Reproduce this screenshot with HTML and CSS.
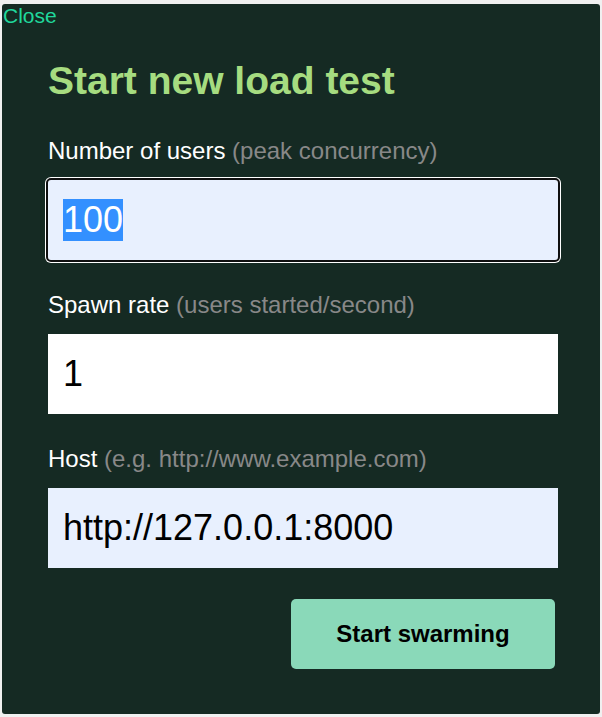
FILE: index.html
```html
<!DOCTYPE html>
<html lang="en">
<head>
<meta charset="utf-8">
<title>Start new load test</title>
<link rel="stylesheet" href="styles.css">
</head>
<body>
<div class="modal">
  <a class="close" href="#">Close</a>
  <form class="form">
    <h1 class="title">Start new load test</h1>
    <div class="field">
      <label class="label" for="users">Number of users <span class="hint">(peak concurrency)</span></label>
      <input class="input autofill focused" id="users" type="text" value="100">
    </div>
    <div class="field">
      <label class="label" for="rate">Spawn rate <span class="hint">(users started/second)</span></label>
      <input class="input" id="rate" type="text" value="1">
    </div>
    <div class="field">
      <label class="label" for="host">Host <span class="hint">(e.g. http://www.example.com)</span></label>
      <input class="input autofill" id="host" type="text" value="http://127.0.0.1:8000">
    </div>
    <button class="submit" type="button">Start swarming</button>
  </form>
</div>
<script src="script.js"></script>
</body>
</html>
```
FILE: styles.css
```css
html, body {
  margin: 0;
  padding: 0;
}
body {
  background: #f0f0f0;
  font-family: "Liberation Sans", Arial, sans-serif;
}
.modal {
  box-sizing: border-box;
  margin: 4px 2px 3px 2px;
  height: 710px;
  background: #152a23;
  border-radius: 3px;
  display: flex;
  flex-direction: column;
}
.close {
  align-self: flex-start;
  color: #20d89c;
  font-size: 21px;
  line-height: 23px;
  padding-top: 0;
  padding-left: 1px;
  text-decoration: none;
}
.form {
  display: flex;
  flex-direction: column;
  padding: 0 40px 0 46px;
  margin: 0;
}
.title {
  margin: 31px 0 1px 0;
  font-size: 39px;
  line-height: 46px;
  font-weight: bold;
  color: #a6dc80;
}
.field {
  display: flex;
  flex-direction: column;
  gap: 15px;
  margin-top: 32px;
}
.field + .field {
  margin-top: 31px;
}
.label {
  font-size: 24px;
  line-height: 28px;
  color: #ffffff;
}
.hint {
  color: #888888;
}
.input {
  box-sizing: border-box;
  width: 510px;
  height: 80px;
  border: none;
  margin: 0;
  padding: 0 15px;
  font-family: "Liberation Sans", Arial, sans-serif;
  font-size: 36px;
  color: #000;
  background: #ffffff;
  outline: none;
}
.input.autofill {
  background: #e8f0fe;
}
.input.focused {
  border-radius: 3px;
  outline: 2px solid #101010;
  outline-offset: 0;
  box-shadow: 0 0 0 3px #ffffff;
}
.input::selection {
  background: #3390ff;
  color: #ffffff;
}
.submit {
  align-self: flex-end;
  margin: 31px 5px 0 0;
  width: 264px;
  height: 70px;
  border: none;
  border-radius: 5px;
  background: #8ad9b9;
  color: #000;
  font-family: "Liberation Sans", Arial, sans-serif;
  font-size: 24px;
  font-weight: bold;
  cursor: pointer;
}
```
FILE: script.js
```js
var users = document.getElementById('users');
users.focus();
users.select();
```
